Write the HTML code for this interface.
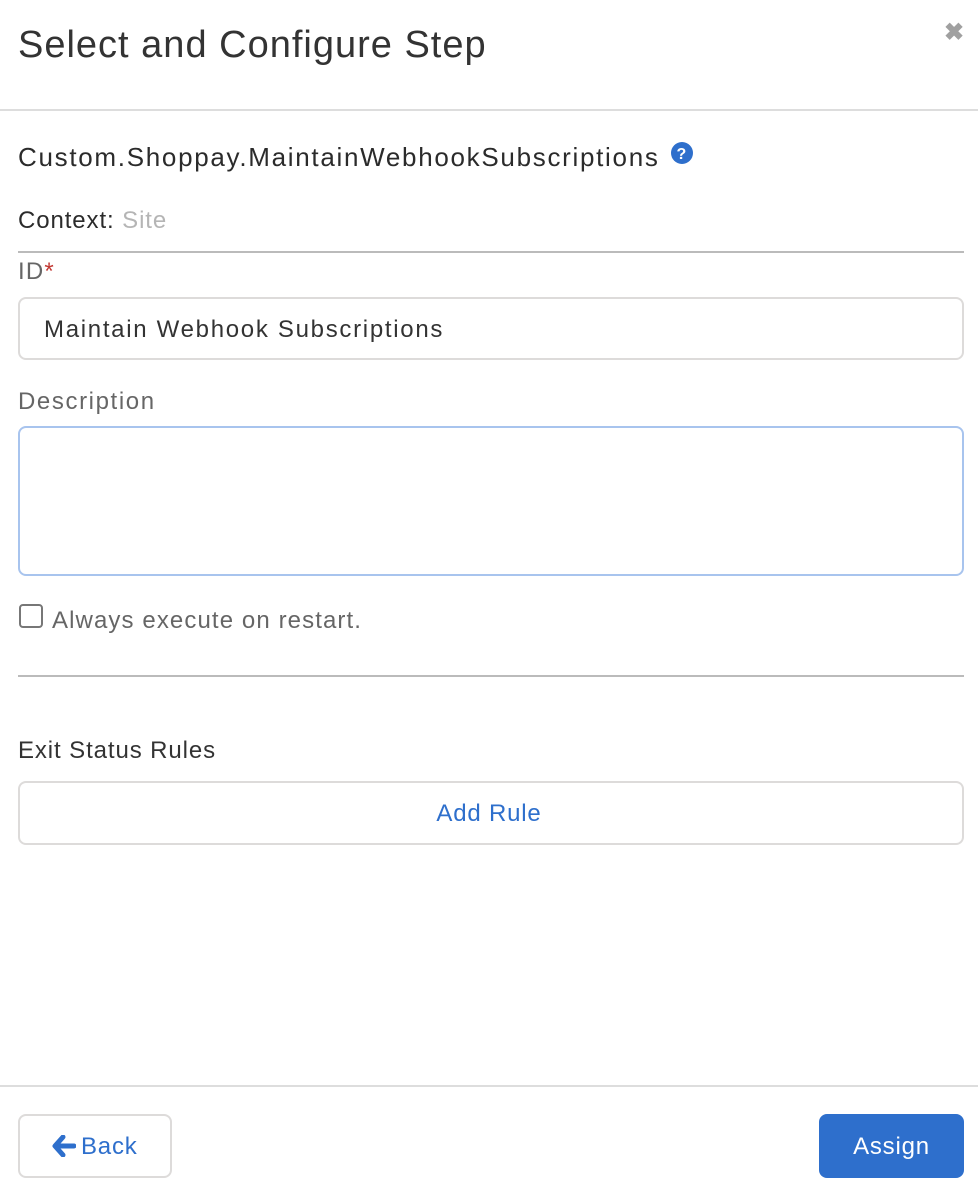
<!DOCTYPE html>
<html><head><style>
body{margin:0;width:978px;height:1194px;background:#fff;font-family:"Liberation Sans",sans-serif;position:relative;overflow:hidden;color:#2b2b2b}
.a{position:absolute;white-space:nowrap;letter-spacing:1.2px}
.hr{position:absolute;left:0;height:2px;background:#dddddd}
.box{position:absolute;border:2px solid #dddbda;border-radius:8px;box-sizing:border-box}
</style></head><body>
<div class="a" style="left:18px;top:24px;font-size:38px;color:#333;letter-spacing:1px">Select and Configure Step</div>
<div class="a" style="left:944px;top:18px;font-size:24px;color:#a0a0a0;font-weight:bold">✖</div>
<div class="hr" style="top:109px;width:978px"></div>
<div class="a" style="left:18px;top:142px;font-size:26px;letter-spacing:1.7px">Custom.Shoppay.MaintainWebhookSubscriptions</div>
<svg class="a" style="left:671px;top:142px" width="22" height="22" viewBox="0 0 22 22"><circle cx="11" cy="11" r="11" fill="#2e6fcc"/><text x="11" y="17" font-size="16" font-weight="bold" fill="#fff" text-anchor="middle" font-family="Liberation Sans">?</text></svg>
<div class="a" style="left:18px;top:207px;font-size:24px;letter-spacing:0.9px">Context: <span style="color:#b5b5b5">Site</span></div>
<div class="hr" style="top:251px;left:18px;width:946px;background:#bbb"></div>
<div class="a" style="left:18px;top:258px;font-size:24px;color:#666">ID<span style="color:#c23934">*</span></div>
<div class="box" style="left:18px;top:297px;width:946px;height:63px"></div>
<div class="a" style="left:44px;top:316px;font-size:24px;color:#333;letter-spacing:1.7px">Maintain Webhook Subscriptions</div>
<div class="a" style="left:18px;top:388px;font-size:24px;color:#666;letter-spacing:1.6px">Description</div>
<div class="box" style="left:18px;top:426px;width:946px;height:150px;border-color:#a8c4ee"></div>
<div class="box" style="left:19px;top:604px;width:24px;height:24px;border-radius:4px;border-color:#777"></div>
<div class="a" style="left:52px;top:607px;font-size:24px;color:#666;letter-spacing:1.1px">Always execute on restart.</div>
<div class="hr" style="top:675px;left:18px;width:946px;background:#bbb"></div>
<div class="a" style="left:18px;top:737px;font-size:24px;color:#333;letter-spacing:0.9px">Exit Status Rules</div>
<div class="box" style="left:18px;top:781px;width:946px;height:64px"></div>
<div class="a" style="left:0;width:978px;text-align:center;top:800px;font-size:24px;color:#2e6fcc;letter-spacing:0.8px">Add Rule</div>
<div class="hr" style="top:1085px;width:978px"></div>
<div class="box" style="left:18px;top:1114px;width:154px;height:64px"></div>
<svg class="a" style="left:52px;top:1135px" width="24" height="22" viewBox="0 0 24 22"><path d="M11 2 L3 11 L11 20 M4 11 H22" stroke="#2e6fcc" stroke-width="5" fill="none" stroke-linecap="round" stroke-linejoin="round"/></svg>
<div class="a" style="left:81px;top:1133px;font-size:24px;color:#2e6fcc;letter-spacing:0.8px">Back</div>
<div class="a" style="left:819px;top:1114px;width:145px;height:64px;background:#2e6fcc;border-radius:8px;color:#fff;font-size:24px;text-align:center;line-height:66px;letter-spacing:0.8px">Assign</div>
</body></html>
